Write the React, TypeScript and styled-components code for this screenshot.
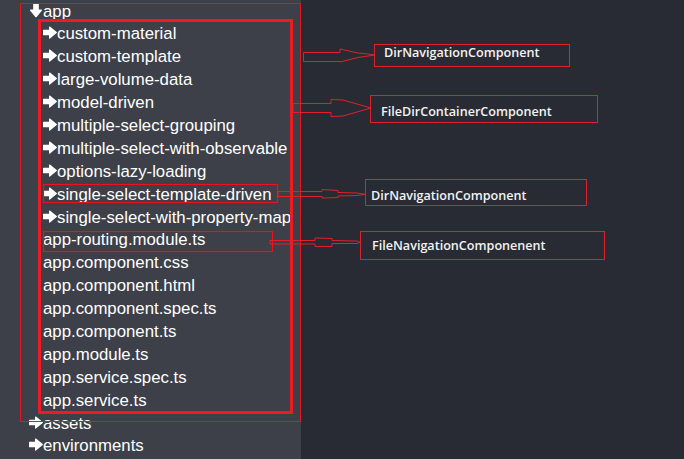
import React from 'react';
import styled, { createGlobalStyle } from 'styled-components';

const GlobalStyle = createGlobalStyle`
  html, body { margin: 0; padding: 0; background: #282b33; }
  body { font-family: "Liberation Sans", Arial, sans-serif; }
`;

const Page = styled.div`
  position: relative;
  display: flex;
  width: 684px;
  height: 459px;
  overflow: hidden;
  background: #282b33;
`;

const Sidebar = styled.aside`
  flex: none;
  width: 301px;
  padding-top: 0.5px;
  background: #3d4048;
`;

const Canvas = styled.main`
  flex: 1;
  background: #282b33;
`;

const Tree = styled.ul`
  list-style: none;
  margin: 0;
  padding: 0;
`;

const Item = styled.li`
  margin: 0;
  padding: 0;
`;

const Row = styled.div<{ $depth: number }>`
  display: flex;
  align-items: baseline;
  height: 22.9px;
  line-height: 22.9px;
  padding-left: ${(p) => 29 + p.$depth * 14}px;
  color: #ffffff;
  font-size: 16.8px;
  white-space: nowrap;
`;

const Icon = styled.svg<{ $down?: boolean }>`
  flex: none;
  width: 14px;
  height: 13px;
  margin-bottom: 0.5px;
  transform: ${(p) => (p.$down ? 'rotate(90deg)' : 'none')};
`;

const Label = styled.span``;

const Overlay = styled.svg`
  position: absolute;
  left: 0;
  top: 0;
  width: 684px;
  height: 459px;
  pointer-events: none;
`;

const Callout = styled.div<{ $x: number; $y: number; $w: number; $h: number; $px: number; $py: number }>`
  position: absolute;
  left: ${(p) => p.$x}px;
  top: ${(p) => p.$y}px;
  width: ${(p) => p.$w}px;
  height: ${(p) => p.$h}px;
  box-sizing: border-box;
  border: 1px solid #e0212b;
  padding: ${(p) => p.$py}px 0 0 ${(p) => p.$px}px;
  font-family: "Open Sans", "Noto Sans", sans-serif;
  font-weight: 600;
  font-size: 12.6px;
  line-height: 16px;
  color: #f2f2f2;
  white-space: nowrap;
`;

const Arrow: React.FC<{ down?: boolean }> = ({ down }) => (
  <Icon $down={down} viewBox="0 0 14 13">
    <path
      d="M0.6 4.3 H6.6 V1 L13.3 6.5 L6.6 12 V8.7 H0.6 Z"
      fill="#ffffff"
      stroke="#ffffff"
      strokeWidth={1.2}
      strokeLinejoin="round"
    />
  </Icon>
);

type Node = { name: string; dir?: boolean; open?: boolean; children?: Node[] };

const tree: Node[] = [
  {
    name: 'app',
    dir: true,
    open: true,
    children: [
      { name: 'custom-material', dir: true },
      { name: 'custom-template', dir: true },
      { name: 'large-volume-data', dir: true },
      { name: 'model-driven', dir: true },
      { name: 'multiple-select-grouping', dir: true },
      { name: 'multiple-select-with-observable', dir: true },
      { name: 'options-lazy-loading', dir: true },
      { name: 'single-select-template-driven', dir: true },
      { name: 'single-select-with-property-map', dir: true },
      { name: 'app-routing.module.ts' },
      { name: 'app.component.css' },
      { name: 'app.component.html' },
      { name: 'app.component.spec.ts' },
      { name: 'app.component.ts' },
      { name: 'app.module.ts' },
      { name: 'app.service.spec.ts' },
      { name: 'app.service.ts' },
    ],
  },
  { name: 'assets', dir: true },
  { name: 'environments', dir: true },
];

const TreeNode: React.FC<{ node: Node; depth: number }> = ({ node, depth }) => (
  <Item>
    <Row $depth={depth}>
      {node.dir && <Arrow down={node.open} />}
      <Label>{node.name}</Label>
    </Row>
    {node.open && node.children && (
      <Tree>
        {node.children.map((c) => (
          <TreeNode key={c.name} node={c} depth={depth + 1} />
        ))}
      </Tree>
    )}
  </Item>
);

const RED = '#e8141c';
const LINE = '#e0212b';

export default function App() {
  return (
    <>
      <GlobalStyle />
      <Page>
        <Sidebar>
          <Tree>
            {tree.map((n) => (
              <TreeNode key={n.name} node={n} depth={0} />
            ))}
          </Tree>
        </Sidebar>
        <Canvas />
        <Overlay viewBox="0 0 684 459">
          <g fill="none">
            <rect x={20.5} y={3.5} width={280} height={418} stroke={RED} strokeWidth={1} />
            <rect x={39.5} y={20.5} width={252} height={392} stroke="#ed1c24" strokeWidth={3} />
            <rect x={43.5} y={184.5} width={234} height={18} stroke={RED} strokeWidth={1.2} />
            <rect x={43.5} y={231.5} width={229} height={20} stroke={RED} strokeWidth={1.2} />
            <polygon
              stroke={LINE}
              strokeWidth={1}
              points="303.5,52.5 340,52.5 340,49 358,53 368,54 375,55 368,56 358,57.5 340,62 340,61.5 303.5,61.5"
            />
            <polygon
              stroke={LINE}
              strokeWidth={1}
              points="293,103.5 331,103.5 331,99.5 343,100 371,108 343,116 331,116.5 331,112.5 293,112.5"
            />
            <polygon
              stroke={LINE}
              strokeWidth={1}
              points="278,191.5 322,191.5 322,189.5 338,190.5 338,192.5 357,193 365,194.3 357,195.5 338,196 338,197.5 322,198 322,196.5 278,196.5"
            />
            <polygon
              stroke={LINE}
              strokeWidth={1}
              points="270,240.5 315,240.5 315,238 332,238.5 332,240.5 357,241 360,242.3 357,243.5 332,243.5 332,246.5 315,246.5 315,244 270,244"
            />
          </g>
        </Overlay>
        <Callout $x={374} $y={44} $w={196} $h={23} $px={9} $py={0}>
          DirNavigationComponent
        </Callout>
        <Callout $x={370} $y={95} $w={228} $h={28} $px={10} $py={8}>
          FileDirContainerComponent
        </Callout>
        <Callout $x={365} $y={179} $w={222} $h={27} $px={5} $py={8}>
          DirNavigationComponent
        </Callout>
        <Callout $x={360} $y={231} $w={245} $h={29} $px={11} $py={6}>
          FileNavigationComponenent
        </Callout>
      </Page>
    </>
  );
}
